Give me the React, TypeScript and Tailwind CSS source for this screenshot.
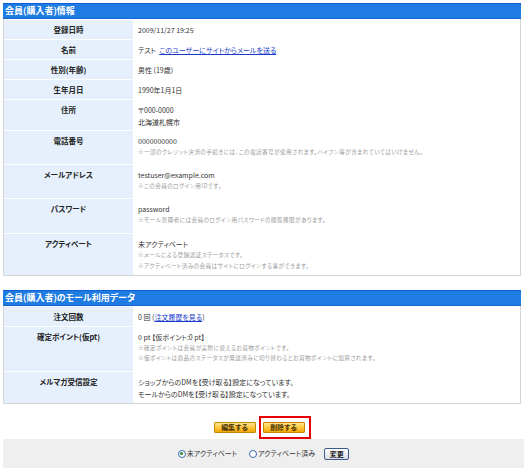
import React from "react";

const palt = "[font-feature-settings:'palt']";

function Label({ children }: { children: React.ReactNode }) {
  return (
    <div className="w-[129px] shrink-0 bg-[#e5f0fc] text-center font-bold text-[7.5px] leading-[12px] text-[#222] pt-[4px]">
      {children}
    </div>
  );
}

function Note({ children }: { children: React.ReactNode }) {
  return (
    <div className="text-[5.6px] leading-[11px] tracking-[0.45px] text-[#9a9a9a]">{children}</div>
  );
}

function Row({
  label,
  children,
  pb,
}: {
  label: string;
  children: React.ReactNode;
  pb: string;
}) {
  return (
    <div className="flex">
      <Label>{label}</Label>
      <div className={`flex-1 pl-[5px] pt-[4px] text-[7px] leading-[12px] text-[#333] ${pb}`}>{children}</div>
    </div>
  );
}

function Header({ children }: { children: React.ReactNode }) {
  return (
    <div className="h-[16px] bg-[#1f7ce2] border-t border-[#0a5fd3] border-b border-b-[#1565cf] pl-[2px] text-white font-bold text-[9px] leading-[14px]">
      {children}
    </div>
  );
}

function OrangeButton({ children }: { children: React.ReactNode }) {
  return (
    <div className="w-[42px] h-[11px] border border-[#c58a00] bg-gradient-to-b from-[#ffe58a] via-[#ffc83a] to-[#f2a800] text-[#4a3300] font-bold text-[7px] leading-[9px] text-center rounded-[1px]">
      {children}
    </div>
  );
}

export default function App() {
  return (
    <div
      className={`w-[526px] h-[470px] bg-white overflow-hidden font-['Noto_Sans_CJK_JP','Noto_Sans',sans-serif] ${palt}`}
    >
      <div className="pt-[3px] px-[3px] w-[524px]">
        <Header>会員(購入者)情報</Header>
        <div className="flex flex-col gap-[1px] border-x border-b border-[#d4d4d4] pt-[1px]">
          <Row label="登録日時" pb="pb-[3px]">2009/11/27 19:25</Row>
          <Row label="名前" pb="pb-[3px]">
            テスト&nbsp;&nbsp;
            <span className="text-[#1a3ccc] underline">このユーザーにサイトからメールを送る</span>
          </Row>
          <Row label="性別(年齢)" pb="pb-[3px]">男性 (19歳)</Row>
          <Row label="生年月日" pb="pb-[3px]">1990年1月1日</Row>
          <Row label="住所" pb="pb-[2px]">
            <div>〒000-0000</div>
            <div>北海道札幌市</div>
          </Row>
          <Row label="電話番号" pb="pb-[6px]">
            <div className="text-[#333]">0000000000</div>
            <Note>※一部のクレジット決済の手続きには、この電話番号が使用されます。ハイフン等が含まれていてはいけません。</Note>
          </Row>
          <Row label="メールアドレス" pb="pb-[6px]">
            <div>testuser@example.com</div>
            <Note>※この会員のログイン用IDです。</Note>
          </Row>
          <Row label="パスワード" pb="pb-[7px]">
            <div>password</div>
            <Note>※モール管理者には会員のログイン用パスワードの閲覧権限があります。</Note>
          </Row>
          <Row label="アクティベート" pb="pb-[3px]">
            <div>未アクティベート</div>
            <Note>※メールによる登録認証ステータスです。</Note>
            <Note>※アクティベート済みの会員はサイトにログインする事ができます。</Note>
          </Row>
        </div>

        <div className="mt-[14px]">
          <Header>会員(購入者)のモール利用データ</Header>
          <div className="flex flex-col gap-[1px] border-x border-b border-[#d4d4d4] pt-[1px]">
            <Row label="注文回数" pb="pb-[3px]">
              0 回 (<span className="text-[#1a3ccc] underline">注文履歴を見る</span>)
            </Row>
            <div className="flex">
              <Label>確定ポイント(仮pt)</Label>
              <div className="flex-1 pl-[5px] pt-[4px] pb-[8px] text-[7px] leading-[12px] text-[#333]">
                <div>0 pt 【仮ポイント:0 pt】</div>
                <div className="text-[5.6px] leading-[10px] tracking-[0.45px] text-[#9a9a9a]">
                  ※確定ポイントは会員が実際に使えるお買物ポイントです。
                </div>
                <div className="text-[5.6px] leading-[10px] tracking-[0.45px] text-[#9a9a9a]">
                  ※仮ポイントは商品のステータスが発送済みに切り替わるとお買物ポイントに加算されます。
                </div>
              </div>
            </div>
            <Row label="メルマガ受信設定" pb="pb-[3px]">
              <div>ショップからのDMを【受け取る】設定になっています。</div>
              <div>モールからのDMを【受け取る】設定になっています。</div>
            </Row>
          </div>
        </div>

        <div className="flex justify-center items-center gap-[3px] pt-[12px]">
          <OrangeButton>編集する</OrangeButton>
          <div className="border-2 border-[#e60000] pl-[2px] pr-[4px] py-[4px]">
            <OrangeButton>削除する</OrangeButton>
          </div>
        </div>
      </div>

      <div className="mx-[3px] w-[521px] h-[29px] bg-[#efefef] flex items-center justify-center text-[7px] text-[#333]">
        <span className="w-[8px] h-[8px] rounded-full border border-[#3a6aa8] bg-white flex items-center justify-center">
          <span className="w-[3px] h-[3px] rounded-full bg-[#2a8a3a]" />
        </span>
        <span className="ml-[1px]">未アクティベート</span>
        <span className="ml-[12px] w-[8px] h-[8px] rounded-full border border-[#3a6aa8] bg-white" />
        <span className="ml-[1px]">アクティベート済み</span>
        <span className="ml-[9px] w-[25px] h-[12px] border border-[#3a5a8a] rounded-[2px] bg-gradient-to-b from-white to-[#d9dde6] text-center font-bold text-[7px] leading-[10px] text-[#222]">
          変更
        </span>
      </div>
    </div>
  );
}
